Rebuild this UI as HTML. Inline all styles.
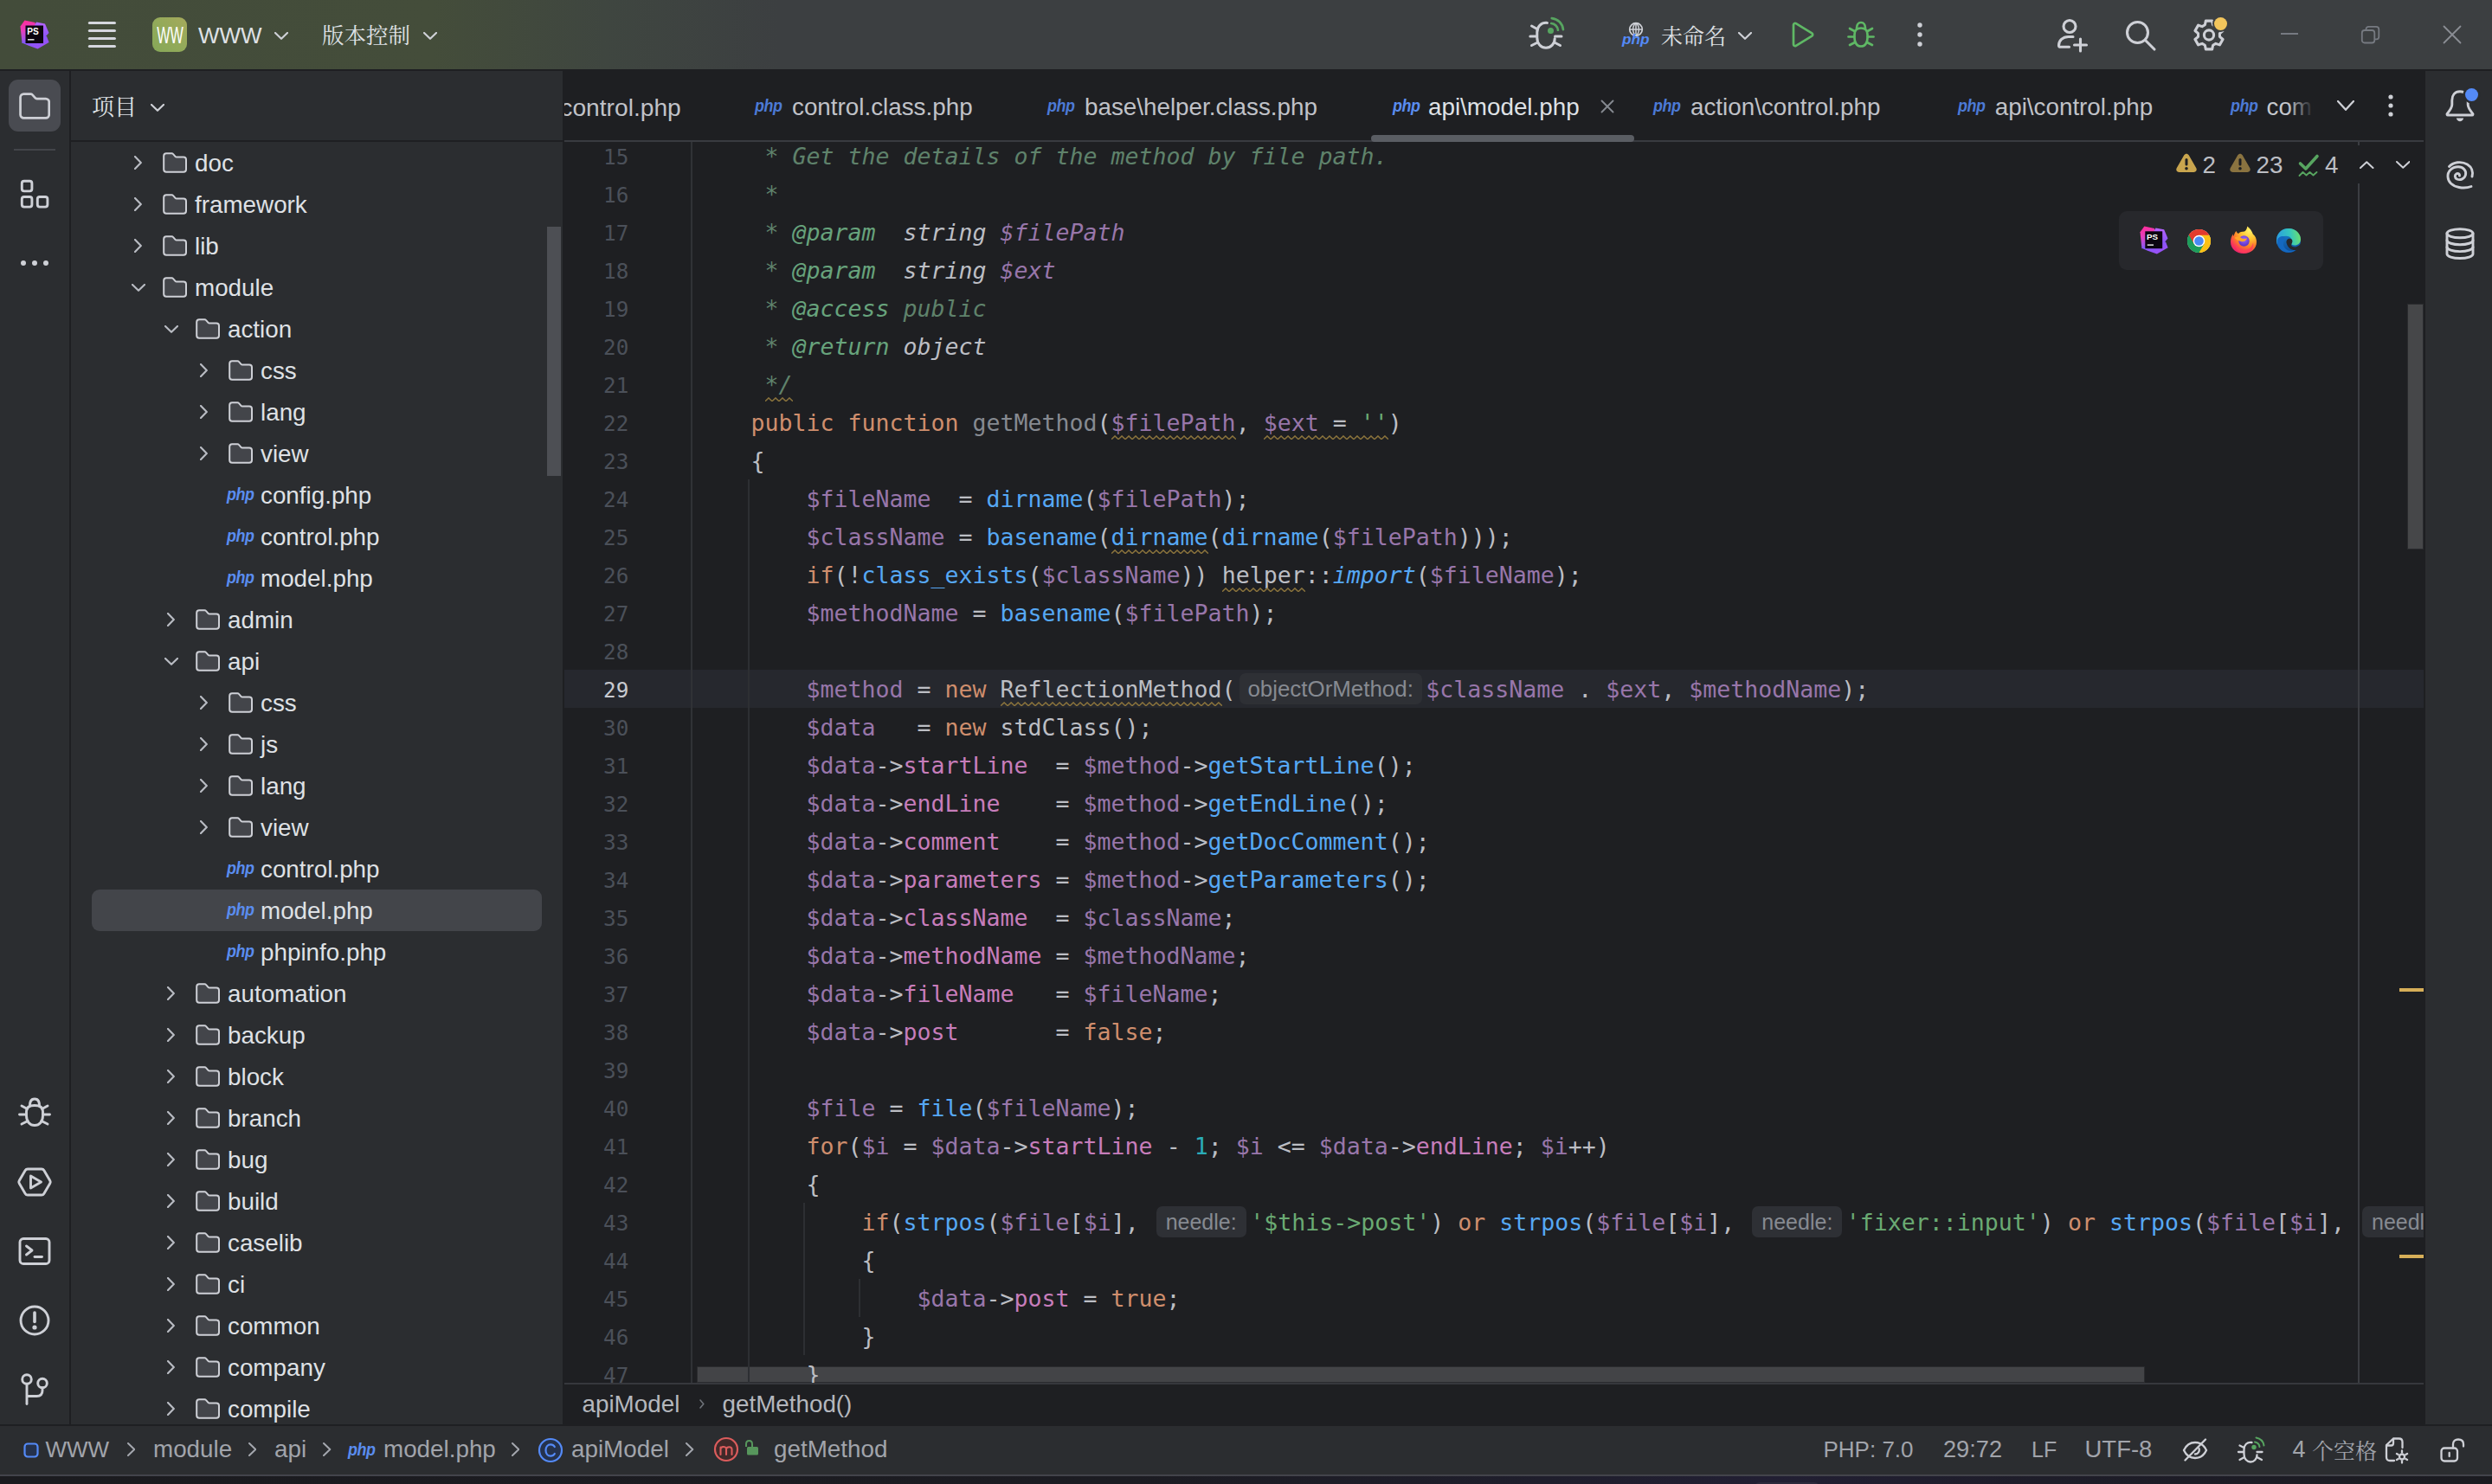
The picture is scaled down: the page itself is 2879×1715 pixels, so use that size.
<!DOCTYPE html><html lang="zh-CN"><head><meta charset="utf-8"><title>www – api\model.php</title><style>
*{box-sizing:border-box}
html,body{margin:0;padding:0}
body{width:2879px;height:1715px;overflow:hidden;background:#1e1f22;position:relative;font-family:'Liberation Sans','Noto Sans CJK SC',sans-serif;color:#dfe1e5;-webkit-font-smoothing:antialiased}
.abs{position:absolute}
.t{position:absolute;white-space:pre;font-size:27.8px;line-height:40px;height:40px;color:#dfe1e5}
.cjk{font-family:'Liberation Serif','Noto Serif CJK SC',serif;font-size:25.5px}
#title{left:0;top:0;width:2879px;height:80px;background:linear-gradient(90deg,#434c3a 0px,#444d3a 500px,#3f4640 700px,#3c3f41 900px)}
#lstrip{left:0;top:82px;width:80px;height:1565px;background:#2b2d30}
#proj{left:82px;top:82px;width:568px;height:1565px;background:#2b2d30;overflow:hidden}
#rstrip{left:2802px;top:82px;width:77px;height:1565px;background:#2b2d30}
#status{left:0;top:1648px;width:2879px;height:56px;background:#2b2d30}
#status .t{color:#a1a4ab}
#taskbar{left:0;top:1704px;width:2879px;height:11px;background:linear-gradient(90deg,#1b1b1f 0%,#1c1c22 45%,#1f1e2c 62%,#221f33 71%,#1e1d29 82%,#1b1b20 100%);border-top:2px solid #43444b}
#editor{left:652px;top:82px;width:2148px;height:1565px;background:#1e1f22;overflow:hidden}
.row{position:absolute;left:0;height:48px;width:568px}
.row .t{top:5.3px}
.ln{position:absolute;left:0;width:74.3px;text-align:right;font-family:'DejaVu Sans Mono','Liberation Mono',monospace;font-size:24.3px;line-height:44px;height:44px;color:#4b5059;margin-top:1.9px}
.cl{position:absolute;left:151.5px;margin-top:1.3px;white-space:pre;font-family:'DejaVu Sans Mono','Liberation Mono',monospace;font-size:26.58px;line-height:44px;height:44px;color:#bcbec4}
.k{color:#cf8e6d} .v{color:#9876aa} .p{color:#c77dbb} .f{color:#56a8f5} .s{color:#6aab73} .n{color:#2aacb8}
.d{color:#5f826b;font-style:italic} .dt{color:#67a37c;font-style:italic} .dw{color:#bcbec4;font-style:italic} .dv{color:#9876aa;font-style:italic}
.g{color:#868a91} .i{font-style:italic}
.w{}
.h{display:inline-block;vertical-align:top;height:36px;margin:2.7px 4.5px 0 4px;padding:0;text-align:center;border-radius:7px;background:#2e3035;color:#868a91;font-family:'Liberation Sans','Noto Sans CJK SC',sans-serif;font-size:25px;line-height:36px;font-style:normal;width:104px}
.h.o{width:211px;font-size:25.9px}
</style></head><body>
<div id="title" class="abs">
<svg style="position:absolute;left:23px;top:23px" width="34" height="34" viewBox="0 0 34 34" fill="none" >
<defs>
<linearGradient id="psa" x1="0.3" y1="0" x2="0.5" y2="1"><stop offset="0" stop-color="#ff2d9a"/><stop offset="0.45" stop-color="#e040c0"/><stop offset="1" stop-color="#7a5cff"/></linearGradient>
<linearGradient id="psb" x1="0" y1="0" x2="0" y2="1"><stop offset="0" stop-color="#b765ff"/><stop offset="1" stop-color="#7a4df5"/></linearGradient>
<linearGradient id="psc" x1="0" y1="0" x2="1" y2="1"><stop offset="0" stop-color="#7a5cff"/><stop offset="1" stop-color="#a24df2"/></linearGradient>
</defs>
<polygon points="5.5,0.5 17.5,3 20,14 9,26 2.500,27 0.5,7.500" fill="url(#psa)"/>
<polygon points="19,2.5 29,4.5 33.5,15 30,19 33.500,26 24,24 14,12" fill="url(#psb)"/>
<polygon points="2.500,26.500 12,20 31,19 33.5,26 20.5,33.5 9.5,29.5" fill="url(#psc)"/>
<rect x="6.5" y="6.5" width="20.5" height="20.5" fill="#0b0410"/>
<rect x="9" y="22" width="7.5" height="1.6" fill="#d8d8d8"/>
<text x="8.3" y="16.9" font-family="Liberation Sans,sans-serif" font-weight="bold" font-size="10.2" fill="#fff" textLength="13.5" lengthAdjust="spacingAndGlyphs">PS</text>
</svg>
<svg style="position:absolute;left:100px;top:23px" width="36" height="34" viewBox="0 0 36 34" fill="none" ><line x1="3.4" y1="3.5" x2="32.4" y2="3.5" stroke="#d5d7de" stroke-width="3.2" stroke-linecap="round"/><line x1="3.4" y1="12.5" x2="32.4" y2="12.5" stroke="#d5d7de" stroke-width="3.2" stroke-linecap="round"/><line x1="3.4" y1="21.5" x2="32.4" y2="21.5" stroke="#d5d7de" stroke-width="3.2" stroke-linecap="round"/><line x1="3.4" y1="30.5" x2="32.4" y2="30.5" stroke="#d5d7de" stroke-width="3.2" stroke-linecap="round"/></svg>
<div class="abs" style="left:176px;top:20px;width:40px;height:40px;border-radius:9px;background:linear-gradient(45deg,#86a858 0%,#93aa5a 50%,#a6a95c 100%)"></div>
<div class="abs" style="left:176px;top:20px;width:40px;height:40px;text-align:center;overflow:visible"><span style="display:inline-block;font:27px/40px 'Liberation Sans',sans-serif;color:#fff;transform:scaleX(0.6);transform-origin:50% 50%;margin-left:-10px;margin-right:-10px;position:relative;top:0.5px">WW</span></div>
<span class="t" style="left:229px;top:21px;font-size:26px">WWW</span>
<svg style="position:absolute;left:317px;top:36.5px" width="16" height="9" viewBox="0 0 16 9" fill="none" ><path d="M1 1 L8.0 7.8 L15 1" stroke="#ced0d6" stroke-width="2.2" stroke-linecap="round" stroke-linejoin="round"/></svg>
<span class="t cjk" style="left:372px;top:21.7px;letter-spacing:0px">版本控制</span>
<svg style="position:absolute;left:489px;top:36.5px" width="16" height="9" viewBox="0 0 16 9" fill="none" ><path d="M1 1 L8.0 7.8 L15 1" stroke="#ced0d6" stroke-width="2.2" stroke-linecap="round" stroke-linejoin="round"/></svg>
<svg style="position:absolute;left:1766px;top:19px" width="42" height="38" viewBox="0 0 42 38" fill="none" >
<g stroke="#ced0d6" stroke-width="3" stroke-linecap="round" fill="none">
<path d="M21.5 7.400 C14.5 6.800 9.800 11.500 9.800 18.500 V24.500 C9.800 31.500 14.200 36.200 20 36.200 C25.800 36.200 30.200 31.500 30.200 25.500"/>
<path d="M1.800 23 H9.500"/><path d="M30.500 23 H38"/>
<path d="M3.500 11 L9.800 14.500"/><path d="M3.500 33.500 L10.500 30"/><path d="M36.500 33.500 L29.800 30"/>
</g>
<circle cx="25.500" cy="16.500" r="3.500" fill="#57a560"/>
<path d="M26.240 8.030 A8.500 8.500 0 0 1 33.970 15.760" stroke="#57a560" stroke-width="2.700" stroke-linecap="round"/>
<path d="M26.760 2.060 A14.500 14.500 0 0 1 39.940 15.240" stroke="#57a560" stroke-width="2.700" stroke-linecap="round"/>
</svg>
<svg style="position:absolute;left:1881px;top:25px" width="18" height="18" viewBox="0 0 18 18" fill="none" ><circle cx="9" cy="9" r="7.3" stroke="#ced0d6" stroke-width="1.7"/><path d="M1.7 9 H16.3 M9 1.7 V16.3 M9 1.7 C4.5 5 4.5 13 9 16.3 M9 1.7 C13.5 5 13.5 13 9 16.3" stroke="#ced0d6" stroke-width="1.5"/></svg>
<span class="abs" style="left:1874px;top:34.3px;font:italic bold 16px/24px 'Liberation Sans',sans-serif;color:#548af7;transform:scaleX(1.08);transform-origin:0 50%;letter-spacing:0px">php</span>
<span class="t cjk" style="left:1919px;top:22.5px;font-size:25px">未命名</span>
<svg style="position:absolute;left:2008px;top:37px" width="16" height="9" viewBox="0 0 16 9" fill="none" ><path d="M1 1 L8.0 7.8 L15 1" stroke="#ced0d6" stroke-width="2.2" stroke-linecap="round" stroke-linejoin="round"/></svg>
<svg style="position:absolute;left:2068px;top:24px" width="30" height="32" viewBox="0 0 30 32" fill="none" ><path d="M4 4.8 C4 3.3 5.6 2.4 6.9 3.2 L25.3 14.3 C26.5 15.1 26.5 16.9 25.3 17.7 L6.9 28.8 C5.6 29.6 4 28.7 4 27.2 Z" stroke="#5fb865" stroke-width="2.7" stroke-linejoin="round"/></svg>
<svg style="position:absolute;left:2133px;top:23px" width="34" height="33" viewBox="0 0 34 33" fill="none" >
<g stroke="#5fb865" stroke-width="2.7" stroke-linecap="round" fill="none">
<path d="M9.5 17 C9.5 12 12.5 9.5 17 9.5 C21.5 9.5 24.5 12 24.5 17 V21 C24.5 26.5 21.5 30.5 17 30.5 C12.500 30.5 9.5 26.5 9.5 21 Z"/>
<path d="M12 9.5 C12 5.5 14 3 17 3 C20 3 22 5.5 22 9.5"/>
<path d="M2.5 19.5 H9"/><path d="M25 19.5 H31.500"/>
<path d="M4 10 L9.500 13"/><path d="M30 10 L24.500 13"/>
<path d="M4 29 L10 26"/><path d="M30 29 L24 26"/>
</g></svg>
<svg style="position:absolute;left:2212px;top:23px" width="12" height="34" viewBox="0 0 12 34" fill="none" ><circle cx="6" cy="6" r="2.7" fill="#ced0d6"/><circle cx="6" cy="17" r="2.7" fill="#ced0d6"/><circle cx="6" cy="28" r="2.7" fill="#ced0d6"/></svg>
<svg style="position:absolute;left:2375px;top:20px" width="40" height="42" viewBox="0 0 40 42" fill="none" >
<g stroke="#ced0d6" stroke-width="3.1" stroke-linecap="round" fill="none">
<circle cx="16" cy="10.5" r="7"/>
<path d="M20 22.500 H14.500 C8 22.500 3.500 27 3.500 32.500 C3.500 33.700 4.300 34.300 5.500 34.300 H15.500"/>
<path d="M28.500 25 V39"/><path d="M21.500 32 H35.500"/>
</g></svg>
<svg style="position:absolute;left:2454px;top:22px" width="38" height="38" viewBox="0 0 38 38" fill="none" ><circle cx="15.5" cy="15.5" r="12" stroke="#ced0d6" stroke-width="3.100"/><path d="M24.5 24.5 L35 35" stroke="#ced0d6" stroke-width="3.100" stroke-linecap="round"/></svg>
<svg style="position:absolute;left:2533px;top:20px" width="38" height="40" viewBox="0 0 38 40" fill="none" ><path d="M15.34 4.10 L22.66 4.10 L23.64 8.78 L26.83 10.63 L31.37 9.13 L35.03 15.48 L31.46 18.66 L31.46 22.34 L35.03 25.52 L31.37 31.87 L26.83 30.37 L23.64 32.22 L22.66 36.90 L15.34 36.90 L14.36 32.22 L11.17 30.37 L6.63 31.87 L2.97 25.52 L6.54 22.34 L6.54 18.66 L2.97 15.48 L6.63 9.13 L11.17 10.63 L14.36 8.78 Z" stroke="#ced0d6" stroke-width="3.100" stroke-linejoin="round"/><circle cx="19" cy="20.5" r="5.6" stroke="#ced0d6" stroke-width="3.100"/></svg>
<div class="abs" style="left:2557.500px;top:19.500px;width:15px;height:15px;border-radius:50%;background:#f2c55c;box-shadow:0 0 0 2px #3c3f41"></div>
<div class="abs" style="left:2635px;top:38px;width:20px;height:2px;background:#767a81"></div>
<svg style="position:absolute;left:2727px;top:29px" width="24" height="22" viewBox="0 0 24 22" fill="none" ><rect x="1.8" y="6" width="14.5" height="14.5" rx="3" stroke="#767a81" stroke-width="1.8"/><path d="M6.5 5.5 V4.8 C6.5 3 7.800 1.800 9.500 1.800 H18 C20 1.800 21.300 3 21.300 5 V13.500 C21.300 15.200 20.200 16.300 18.500 16.300 H17" stroke="#767a81" stroke-width="1.8"/></svg>
<svg style="position:absolute;left:2822px;top:29px" width="22" height="22" viewBox="0 0 22 22" fill="none" ><path d="M1.5 1.5 L20.5 20.5 M20.5 1.5 L1.5 20.5" stroke="#8a8d94" stroke-width="1.8" stroke-linecap="round"/></svg>
</div>
<div id="lstrip" class="abs">
<div class="abs" style="left:10px;top:10px;width:60px;height:60px;border-radius:11px;background:#494b51"></div>
<svg style="position:absolute;left:22px;top:25px" width="36" height="30.86" viewBox="0 0 28 24" fill="none" ><path d="M1.2 4.2 a3 3 0 0 1 3 -3 h6.2 a2 2 0 0 1 1.5 .7 l2.6 2.9 a2 2 0 0 0 1.5 .7 h8 a3 3 0 0 1 3 3 v11.3 a3 3 0 0 1 -3 3 h-19.8 a3 3 0 0 1 -3 -3 z" fill="none" stroke="#ced0d6" stroke-width="2.1" stroke-linejoin="round"/></svg>
<div class="abs" style="left:16px;top:90px;width:48px;height:2px;background:#43454a"></div>
<svg style="position:absolute;left:22px;top:124px" width="36" height="36" viewBox="0 0 36 36" fill="none" ><g stroke="#ced0d6" stroke-width="2.9"><rect x="3.3" y="3.3" width="11.6" height="11.6" rx="2.6"/><rect x="3.3" y="21.5" width="11.6" height="11.6" rx="2.6"/><rect x="21.300" y="21.5" width="11.6" height="11.6" rx="2.6"/></g></svg>
<svg style="position:absolute;left:22px;top:216px" width="36" height="12" viewBox="0 0 36 12" fill="none" ><circle cx="5" cy="6" r="3" fill="#ced0d6"/><circle cx="18" cy="6" r="3" fill="#ced0d6"/><circle cx="31" cy="6" r="3" fill="#ced0d6"/></svg>
<svg style="position:absolute;left:20px;top:1185px" width="40" height="36" viewBox="0 0 40 36" fill="none" >
<g stroke="#ced0d6" stroke-width="2.9" stroke-linecap="round" fill="none">
<path d="M10.5 17.500 C10.5 12.5 14.500 10.500 20 10.500 C25.500 10.500 29.5 12.5 29.5 17.500 V22.500 C29.5 29 25.500 33.5 20 33.5 C14.500 33.5 10.5 29 10.5 22.500 Z"/>
<path d="M14.5 10.500 C14.5 6 16.500 3 20 3 C23.500 3 25.5 6 25.5 10.500"/>
<path d="M2.500 21 H10"/><path d="M30 21 H37.500"/>
<path d="M5 11 L11.500 14.500"/><path d="M35 11 L28.500 14.500"/>
<path d="M5 32 L12 28.5"/><path d="M35 32 L28 28.5"/>
</g></svg>
<svg style="position:absolute;left:19px;top:1266px" width="42" height="36" viewBox="0 0 42 36" fill="none" >
<g stroke="#ced0d6" stroke-width="2.9" stroke-linejoin="round" fill="none">
<path d="M13 3 H29 C30.200 3 31.200 3.600 31.800 4.600 L38.800 16.500 C39.400 17.500 39.400 18.600 38.800 19.600 L31.800 31.400 C31.200 32.400 30.200 33 29 33 H13 C11.800 33 10.800 32.400 10.200 31.400 L3.200 19.600 C2.600 18.600 2.600 17.500 3.200 16.500 L10.200 4.600 C10.800 3.600 11.800 3 13 3 Z"/>
<path d="M16.500 11 L28.500 18 L16.500 25 Z"/>
</g></svg>
<svg style="position:absolute;left:20px;top:1347px" width="40" height="34" viewBox="0 0 40 34" fill="none" >
<g stroke="#ced0d6" stroke-width="2.9" stroke-linecap="round" stroke-linejoin="round" fill="none">
<rect x="3" y="2.500" width="34" height="29" rx="4"/>
<path d="M10.5 11 L17 16 L10.5 21"/><path d="M20 23.500 H28.500"/>
</g></svg>
<svg style="position:absolute;left:21px;top:1425px" width="38" height="38" viewBox="0 0 38 38" fill="none" ><circle cx="19" cy="19" r="16" stroke="#ced0d6" stroke-width="2.9"/><path d="M19 10 V20.500" stroke="#ced0d6" stroke-width="3.6" stroke-linecap="round"/><circle cx="19" cy="27" r="2.600" fill="#ced0d6"/></svg>
<svg style="position:absolute;left:22px;top:1504px" width="36" height="40" viewBox="0 0 36 40" fill="none" >
<g stroke="#ced0d6" stroke-width="2.9" stroke-linecap="round" fill="none">
<circle cx="9" cy="8" r="5.300"/><circle cx="27" cy="12.500" r="5.300"/>
<path d="M9 13.500 V36.500"/><path d="M27 18 V21 C27 25 25 27.500 20.500 27.500 H9.500"/>
</g></svg>
</div>
<div id="proj" class="abs">
<span class="t cjk" style="left:24px;top:22.5px;font-size:26px">项目</span>
<svg style="position:absolute;left:92px;top:38px" width="16" height="9" viewBox="0 0 16 9" fill="none" ><path d="M1 1 L8.0 7.8 L15 1" stroke="#ced0d6" stroke-width="2.2" stroke-linecap="round" stroke-linejoin="round"/></svg>
<div class="abs" style="left:0;top:80px;width:568px;height:2px;background:#1e1f22"></div>
<div class="row" style="top:82px">
<svg style="position:absolute;left:73px;top:16px" width="9" height="16" viewBox="0 0 9 16" fill="none" ><path d="M1 1 L7.8 8.0 L1 15" stroke="#b8bbc2" stroke-width="2.2" stroke-linecap="round" stroke-linejoin="round"/></svg>
<svg style="position:absolute;left:106px;top:12px" width="28" height="24" viewBox="0 0 28 24" fill="none" ><path d="M1.2 4.2 a3 3 0 0 1 3 -3 h6.2 a2 2 0 0 1 1.5 .7 l2.6 2.9 a2 2 0 0 0 1.5 .7 h8 a3 3 0 0 1 3 3 v11.3 a3 3 0 0 1 -3 3 h-19.8 a3 3 0 0 1 -3 -3 z" fill="#43454a" stroke="#ced0d6" stroke-width="2" stroke-linejoin="round"/></svg>
<span class="t" style="left:143px">doc</span>
</div>
<div class="row" style="top:130px">
<svg style="position:absolute;left:73px;top:16px" width="9" height="16" viewBox="0 0 9 16" fill="none" ><path d="M1 1 L7.8 8.0 L1 15" stroke="#b8bbc2" stroke-width="2.2" stroke-linecap="round" stroke-linejoin="round"/></svg>
<svg style="position:absolute;left:106px;top:12px" width="28" height="24" viewBox="0 0 28 24" fill="none" ><path d="M1.2 4.2 a3 3 0 0 1 3 -3 h6.2 a2 2 0 0 1 1.5 .7 l2.6 2.9 a2 2 0 0 0 1.5 .7 h8 a3 3 0 0 1 3 3 v11.3 a3 3 0 0 1 -3 3 h-19.8 a3 3 0 0 1 -3 -3 z" fill="#43454a" stroke="#ced0d6" stroke-width="2" stroke-linejoin="round"/></svg>
<span class="t" style="left:143px">framework</span>
</div>
<div class="row" style="top:178px">
<svg style="position:absolute;left:73px;top:16px" width="9" height="16" viewBox="0 0 9 16" fill="none" ><path d="M1 1 L7.8 8.0 L1 15" stroke="#b8bbc2" stroke-width="2.2" stroke-linecap="round" stroke-linejoin="round"/></svg>
<svg style="position:absolute;left:106px;top:12px" width="28" height="24" viewBox="0 0 28 24" fill="none" ><path d="M1.2 4.2 a3 3 0 0 1 3 -3 h6.2 a2 2 0 0 1 1.5 .7 l2.6 2.9 a2 2 0 0 0 1.5 .7 h8 a3 3 0 0 1 3 3 v11.3 a3 3 0 0 1 -3 3 h-19.8 a3 3 0 0 1 -3 -3 z" fill="#43454a" stroke="#ced0d6" stroke-width="2" stroke-linejoin="round"/></svg>
<span class="t" style="left:143px">lib</span>
</div>
<div class="row" style="top:226px">
<svg style="position:absolute;left:70px;top:20px" width="16" height="9" viewBox="0 0 16 9" fill="none" ><path d="M1 1 L8.0 7.8 L15 1" stroke="#b8bbc2" stroke-width="2.2" stroke-linecap="round" stroke-linejoin="round"/></svg>
<svg style="position:absolute;left:106px;top:12px" width="28" height="24" viewBox="0 0 28 24" fill="none" ><path d="M1.2 4.2 a3 3 0 0 1 3 -3 h6.2 a2 2 0 0 1 1.5 .7 l2.6 2.9 a2 2 0 0 0 1.5 .7 h8 a3 3 0 0 1 3 3 v11.3 a3 3 0 0 1 -3 3 h-19.8 a3 3 0 0 1 -3 -3 z" fill="#43454a" stroke="#ced0d6" stroke-width="2" stroke-linejoin="round"/></svg>
<span class="t" style="left:143px">module</span>
</div>
<div class="row" style="top:274px">
<svg style="position:absolute;left:108px;top:20px" width="16" height="9" viewBox="0 0 16 9" fill="none" ><path d="M1 1 L8.0 7.8 L15 1" stroke="#b8bbc2" stroke-width="2.2" stroke-linecap="round" stroke-linejoin="round"/></svg>
<svg style="position:absolute;left:144px;top:12px" width="28" height="24" viewBox="0 0 28 24" fill="none" ><path d="M1.2 4.2 a3 3 0 0 1 3 -3 h6.2 a2 2 0 0 1 1.5 .7 l2.6 2.9 a2 2 0 0 0 1.5 .7 h8 a3 3 0 0 1 3 3 v11.3 a3 3 0 0 1 -3 3 h-19.8 a3 3 0 0 1 -3 -3 z" fill="#43454a" stroke="#ced0d6" stroke-width="2" stroke-linejoin="round"/></svg>
<span class="t" style="left:181px">action</span>
</div>
<div class="row" style="top:322px">
<svg style="position:absolute;left:149px;top:16px" width="9" height="16" viewBox="0 0 9 16" fill="none" ><path d="M1 1 L7.8 8.0 L1 15" stroke="#b8bbc2" stroke-width="2.2" stroke-linecap="round" stroke-linejoin="round"/></svg>
<svg style="position:absolute;left:182px;top:12px" width="28" height="24" viewBox="0 0 28 24" fill="none" ><path d="M1.2 4.2 a3 3 0 0 1 3 -3 h6.2 a2 2 0 0 1 1.5 .7 l2.6 2.9 a2 2 0 0 0 1.5 .7 h8 a3 3 0 0 1 3 3 v11.3 a3 3 0 0 1 -3 3 h-19.8 a3 3 0 0 1 -3 -3 z" fill="#43454a" stroke="#ced0d6" stroke-width="2" stroke-linejoin="round"/></svg>
<span class="t" style="left:219px">css</span>
</div>
<div class="row" style="top:370px">
<svg style="position:absolute;left:149px;top:16px" width="9" height="16" viewBox="0 0 9 16" fill="none" ><path d="M1 1 L7.8 8.0 L1 15" stroke="#b8bbc2" stroke-width="2.2" stroke-linecap="round" stroke-linejoin="round"/></svg>
<svg style="position:absolute;left:182px;top:12px" width="28" height="24" viewBox="0 0 28 24" fill="none" ><path d="M1.2 4.2 a3 3 0 0 1 3 -3 h6.2 a2 2 0 0 1 1.5 .7 l2.6 2.9 a2 2 0 0 0 1.5 .7 h8 a3 3 0 0 1 3 3 v11.3 a3 3 0 0 1 -3 3 h-19.8 a3 3 0 0 1 -3 -3 z" fill="#43454a" stroke="#ced0d6" stroke-width="2" stroke-linejoin="round"/></svg>
<span class="t" style="left:219px">lang</span>
</div>
<div class="row" style="top:418px">
<svg style="position:absolute;left:149px;top:16px" width="9" height="16" viewBox="0 0 9 16" fill="none" ><path d="M1 1 L7.8 8.0 L1 15" stroke="#b8bbc2" stroke-width="2.2" stroke-linecap="round" stroke-linejoin="round"/></svg>
<svg style="position:absolute;left:182px;top:12px" width="28" height="24" viewBox="0 0 28 24" fill="none" ><path d="M1.2 4.2 a3 3 0 0 1 3 -3 h6.2 a2 2 0 0 1 1.5 .7 l2.6 2.9 a2 2 0 0 0 1.5 .7 h8 a3 3 0 0 1 3 3 v11.3 a3 3 0 0 1 -3 3 h-19.8 a3 3 0 0 1 -3 -3 z" fill="#43454a" stroke="#ced0d6" stroke-width="2" stroke-linejoin="round"/></svg>
<span class="t" style="left:219px">view</span>
</div>
<div class="row" style="top:466px">
<span style="position:absolute;left:180px;top:11px;width:34px;height:24px;overflow:visible;font:italic bold 19.5px/24px 'Liberation Sans',sans-serif;color:#5a8df0;display:inline-block;transform-origin:0 50%;transform:scaleX(0.92);letter-spacing:-0.5px;white-space:nowrap">php</span>
<span class="t" style="left:219px">config.php</span>
</div>
<div class="row" style="top:514px">
<span style="position:absolute;left:180px;top:11px;width:34px;height:24px;overflow:visible;font:italic bold 19.5px/24px 'Liberation Sans',sans-serif;color:#5a8df0;display:inline-block;transform-origin:0 50%;transform:scaleX(0.92);letter-spacing:-0.5px;white-space:nowrap">php</span>
<span class="t" style="left:219px">control.php</span>
</div>
<div class="row" style="top:562px">
<span style="position:absolute;left:180px;top:11px;width:34px;height:24px;overflow:visible;font:italic bold 19.5px/24px 'Liberation Sans',sans-serif;color:#5a8df0;display:inline-block;transform-origin:0 50%;transform:scaleX(0.92);letter-spacing:-0.5px;white-space:nowrap">php</span>
<span class="t" style="left:219px">model.php</span>
</div>
<div class="row" style="top:610px">
<svg style="position:absolute;left:111px;top:16px" width="9" height="16" viewBox="0 0 9 16" fill="none" ><path d="M1 1 L7.8 8.0 L1 15" stroke="#b8bbc2" stroke-width="2.2" stroke-linecap="round" stroke-linejoin="round"/></svg>
<svg style="position:absolute;left:144px;top:12px" width="28" height="24" viewBox="0 0 28 24" fill="none" ><path d="M1.2 4.2 a3 3 0 0 1 3 -3 h6.2 a2 2 0 0 1 1.5 .7 l2.6 2.9 a2 2 0 0 0 1.5 .7 h8 a3 3 0 0 1 3 3 v11.3 a3 3 0 0 1 -3 3 h-19.8 a3 3 0 0 1 -3 -3 z" fill="#43454a" stroke="#ced0d6" stroke-width="2" stroke-linejoin="round"/></svg>
<span class="t" style="left:181px">admin</span>
</div>
<div class="row" style="top:658px">
<svg style="position:absolute;left:108px;top:20px" width="16" height="9" viewBox="0 0 16 9" fill="none" ><path d="M1 1 L8.0 7.8 L15 1" stroke="#b8bbc2" stroke-width="2.2" stroke-linecap="round" stroke-linejoin="round"/></svg>
<svg style="position:absolute;left:144px;top:12px" width="28" height="24" viewBox="0 0 28 24" fill="none" ><path d="M1.2 4.2 a3 3 0 0 1 3 -3 h6.2 a2 2 0 0 1 1.5 .7 l2.6 2.9 a2 2 0 0 0 1.5 .7 h8 a3 3 0 0 1 3 3 v11.3 a3 3 0 0 1 -3 3 h-19.8 a3 3 0 0 1 -3 -3 z" fill="#43454a" stroke="#ced0d6" stroke-width="2" stroke-linejoin="round"/></svg>
<span class="t" style="left:181px">api</span>
</div>
<div class="row" style="top:706px">
<svg style="position:absolute;left:149px;top:16px" width="9" height="16" viewBox="0 0 9 16" fill="none" ><path d="M1 1 L7.8 8.0 L1 15" stroke="#b8bbc2" stroke-width="2.2" stroke-linecap="round" stroke-linejoin="round"/></svg>
<svg style="position:absolute;left:182px;top:12px" width="28" height="24" viewBox="0 0 28 24" fill="none" ><path d="M1.2 4.2 a3 3 0 0 1 3 -3 h6.2 a2 2 0 0 1 1.5 .7 l2.6 2.9 a2 2 0 0 0 1.5 .7 h8 a3 3 0 0 1 3 3 v11.3 a3 3 0 0 1 -3 3 h-19.8 a3 3 0 0 1 -3 -3 z" fill="#43454a" stroke="#ced0d6" stroke-width="2" stroke-linejoin="round"/></svg>
<span class="t" style="left:219px">css</span>
</div>
<div class="row" style="top:754px">
<svg style="position:absolute;left:149px;top:16px" width="9" height="16" viewBox="0 0 9 16" fill="none" ><path d="M1 1 L7.8 8.0 L1 15" stroke="#b8bbc2" stroke-width="2.2" stroke-linecap="round" stroke-linejoin="round"/></svg>
<svg style="position:absolute;left:182px;top:12px" width="28" height="24" viewBox="0 0 28 24" fill="none" ><path d="M1.2 4.2 a3 3 0 0 1 3 -3 h6.2 a2 2 0 0 1 1.5 .7 l2.6 2.9 a2 2 0 0 0 1.5 .7 h8 a3 3 0 0 1 3 3 v11.3 a3 3 0 0 1 -3 3 h-19.8 a3 3 0 0 1 -3 -3 z" fill="#43454a" stroke="#ced0d6" stroke-width="2" stroke-linejoin="round"/></svg>
<span class="t" style="left:219px">js</span>
</div>
<div class="row" style="top:802px">
<svg style="position:absolute;left:149px;top:16px" width="9" height="16" viewBox="0 0 9 16" fill="none" ><path d="M1 1 L7.8 8.0 L1 15" stroke="#b8bbc2" stroke-width="2.2" stroke-linecap="round" stroke-linejoin="round"/></svg>
<svg style="position:absolute;left:182px;top:12px" width="28" height="24" viewBox="0 0 28 24" fill="none" ><path d="M1.2 4.2 a3 3 0 0 1 3 -3 h6.2 a2 2 0 0 1 1.5 .7 l2.6 2.9 a2 2 0 0 0 1.5 .7 h8 a3 3 0 0 1 3 3 v11.3 a3 3 0 0 1 -3 3 h-19.8 a3 3 0 0 1 -3 -3 z" fill="#43454a" stroke="#ced0d6" stroke-width="2" stroke-linejoin="round"/></svg>
<span class="t" style="left:219px">lang</span>
</div>
<div class="row" style="top:850px">
<svg style="position:absolute;left:149px;top:16px" width="9" height="16" viewBox="0 0 9 16" fill="none" ><path d="M1 1 L7.8 8.0 L1 15" stroke="#b8bbc2" stroke-width="2.2" stroke-linecap="round" stroke-linejoin="round"/></svg>
<svg style="position:absolute;left:182px;top:12px" width="28" height="24" viewBox="0 0 28 24" fill="none" ><path d="M1.2 4.2 a3 3 0 0 1 3 -3 h6.2 a2 2 0 0 1 1.5 .7 l2.6 2.9 a2 2 0 0 0 1.5 .7 h8 a3 3 0 0 1 3 3 v11.3 a3 3 0 0 1 -3 3 h-19.8 a3 3 0 0 1 -3 -3 z" fill="#43454a" stroke="#ced0d6" stroke-width="2" stroke-linejoin="round"/></svg>
<span class="t" style="left:219px">view</span>
</div>
<div class="row" style="top:898px">
<span style="position:absolute;left:180px;top:11px;width:34px;height:24px;overflow:visible;font:italic bold 19.5px/24px 'Liberation Sans',sans-serif;color:#5a8df0;display:inline-block;transform-origin:0 50%;transform:scaleX(0.92);letter-spacing:-0.5px;white-space:nowrap">php</span>
<span class="t" style="left:219px">control.php</span>
</div>
<div class="row" style="top:946px">
<div class="abs" style="left:24px;top:0;width:520px;height:48px;border-radius:9px;background:#43454a"></div>
<span style="position:absolute;left:180px;top:11px;width:34px;height:24px;overflow:visible;font:italic bold 19.5px/24px 'Liberation Sans',sans-serif;color:#5a8df0;display:inline-block;transform-origin:0 50%;transform:scaleX(0.92);letter-spacing:-0.5px;white-space:nowrap">php</span>
<span class="t" style="left:219px">model.php</span>
</div>
<div class="row" style="top:994px">
<span style="position:absolute;left:180px;top:11px;width:34px;height:24px;overflow:visible;font:italic bold 19.5px/24px 'Liberation Sans',sans-serif;color:#5a8df0;display:inline-block;transform-origin:0 50%;transform:scaleX(0.92);letter-spacing:-0.5px;white-space:nowrap">php</span>
<span class="t" style="left:219px">phpinfo.php</span>
</div>
<div class="row" style="top:1042px">
<svg style="position:absolute;left:111px;top:16px" width="9" height="16" viewBox="0 0 9 16" fill="none" ><path d="M1 1 L7.8 8.0 L1 15" stroke="#b8bbc2" stroke-width="2.2" stroke-linecap="round" stroke-linejoin="round"/></svg>
<svg style="position:absolute;left:144px;top:12px" width="28" height="24" viewBox="0 0 28 24" fill="none" ><path d="M1.2 4.2 a3 3 0 0 1 3 -3 h6.2 a2 2 0 0 1 1.5 .7 l2.6 2.9 a2 2 0 0 0 1.5 .7 h8 a3 3 0 0 1 3 3 v11.3 a3 3 0 0 1 -3 3 h-19.8 a3 3 0 0 1 -3 -3 z" fill="#43454a" stroke="#ced0d6" stroke-width="2" stroke-linejoin="round"/></svg>
<span class="t" style="left:181px">automation</span>
</div>
<div class="row" style="top:1090px">
<svg style="position:absolute;left:111px;top:16px" width="9" height="16" viewBox="0 0 9 16" fill="none" ><path d="M1 1 L7.8 8.0 L1 15" stroke="#b8bbc2" stroke-width="2.2" stroke-linecap="round" stroke-linejoin="round"/></svg>
<svg style="position:absolute;left:144px;top:12px" width="28" height="24" viewBox="0 0 28 24" fill="none" ><path d="M1.2 4.2 a3 3 0 0 1 3 -3 h6.2 a2 2 0 0 1 1.5 .7 l2.6 2.9 a2 2 0 0 0 1.5 .7 h8 a3 3 0 0 1 3 3 v11.3 a3 3 0 0 1 -3 3 h-19.8 a3 3 0 0 1 -3 -3 z" fill="#43454a" stroke="#ced0d6" stroke-width="2" stroke-linejoin="round"/></svg>
<span class="t" style="left:181px">backup</span>
</div>
<div class="row" style="top:1138px">
<svg style="position:absolute;left:111px;top:16px" width="9" height="16" viewBox="0 0 9 16" fill="none" ><path d="M1 1 L7.8 8.0 L1 15" stroke="#b8bbc2" stroke-width="2.2" stroke-linecap="round" stroke-linejoin="round"/></svg>
<svg style="position:absolute;left:144px;top:12px" width="28" height="24" viewBox="0 0 28 24" fill="none" ><path d="M1.2 4.2 a3 3 0 0 1 3 -3 h6.2 a2 2 0 0 1 1.5 .7 l2.6 2.9 a2 2 0 0 0 1.5 .7 h8 a3 3 0 0 1 3 3 v11.3 a3 3 0 0 1 -3 3 h-19.8 a3 3 0 0 1 -3 -3 z" fill="#43454a" stroke="#ced0d6" stroke-width="2" stroke-linejoin="round"/></svg>
<span class="t" style="left:181px">block</span>
</div>
<div class="row" style="top:1186px">
<svg style="position:absolute;left:111px;top:16px" width="9" height="16" viewBox="0 0 9 16" fill="none" ><path d="M1 1 L7.8 8.0 L1 15" stroke="#b8bbc2" stroke-width="2.2" stroke-linecap="round" stroke-linejoin="round"/></svg>
<svg style="position:absolute;left:144px;top:12px" width="28" height="24" viewBox="0 0 28 24" fill="none" ><path d="M1.2 4.2 a3 3 0 0 1 3 -3 h6.2 a2 2 0 0 1 1.5 .7 l2.6 2.9 a2 2 0 0 0 1.5 .7 h8 a3 3 0 0 1 3 3 v11.3 a3 3 0 0 1 -3 3 h-19.8 a3 3 0 0 1 -3 -3 z" fill="#43454a" stroke="#ced0d6" stroke-width="2" stroke-linejoin="round"/></svg>
<span class="t" style="left:181px">branch</span>
</div>
<div class="row" style="top:1234px">
<svg style="position:absolute;left:111px;top:16px" width="9" height="16" viewBox="0 0 9 16" fill="none" ><path d="M1 1 L7.8 8.0 L1 15" stroke="#b8bbc2" stroke-width="2.2" stroke-linecap="round" stroke-linejoin="round"/></svg>
<svg style="position:absolute;left:144px;top:12px" width="28" height="24" viewBox="0 0 28 24" fill="none" ><path d="M1.2 4.2 a3 3 0 0 1 3 -3 h6.2 a2 2 0 0 1 1.5 .7 l2.6 2.9 a2 2 0 0 0 1.5 .7 h8 a3 3 0 0 1 3 3 v11.3 a3 3 0 0 1 -3 3 h-19.8 a3 3 0 0 1 -3 -3 z" fill="#43454a" stroke="#ced0d6" stroke-width="2" stroke-linejoin="round"/></svg>
<span class="t" style="left:181px">bug</span>
</div>
<div class="row" style="top:1282px">
<svg style="position:absolute;left:111px;top:16px" width="9" height="16" viewBox="0 0 9 16" fill="none" ><path d="M1 1 L7.8 8.0 L1 15" stroke="#b8bbc2" stroke-width="2.2" stroke-linecap="round" stroke-linejoin="round"/></svg>
<svg style="position:absolute;left:144px;top:12px" width="28" height="24" viewBox="0 0 28 24" fill="none" ><path d="M1.2 4.2 a3 3 0 0 1 3 -3 h6.2 a2 2 0 0 1 1.5 .7 l2.6 2.9 a2 2 0 0 0 1.5 .7 h8 a3 3 0 0 1 3 3 v11.3 a3 3 0 0 1 -3 3 h-19.8 a3 3 0 0 1 -3 -3 z" fill="#43454a" stroke="#ced0d6" stroke-width="2" stroke-linejoin="round"/></svg>
<span class="t" style="left:181px">build</span>
</div>
<div class="row" style="top:1330px">
<svg style="position:absolute;left:111px;top:16px" width="9" height="16" viewBox="0 0 9 16" fill="none" ><path d="M1 1 L7.8 8.0 L1 15" stroke="#b8bbc2" stroke-width="2.2" stroke-linecap="round" stroke-linejoin="round"/></svg>
<svg style="position:absolute;left:144px;top:12px" width="28" height="24" viewBox="0 0 28 24" fill="none" ><path d="M1.2 4.2 a3 3 0 0 1 3 -3 h6.2 a2 2 0 0 1 1.5 .7 l2.6 2.9 a2 2 0 0 0 1.5 .7 h8 a3 3 0 0 1 3 3 v11.3 a3 3 0 0 1 -3 3 h-19.8 a3 3 0 0 1 -3 -3 z" fill="#43454a" stroke="#ced0d6" stroke-width="2" stroke-linejoin="round"/></svg>
<span class="t" style="left:181px">caselib</span>
</div>
<div class="row" style="top:1378px">
<svg style="position:absolute;left:111px;top:16px" width="9" height="16" viewBox="0 0 9 16" fill="none" ><path d="M1 1 L7.8 8.0 L1 15" stroke="#b8bbc2" stroke-width="2.2" stroke-linecap="round" stroke-linejoin="round"/></svg>
<svg style="position:absolute;left:144px;top:12px" width="28" height="24" viewBox="0 0 28 24" fill="none" ><path d="M1.2 4.2 a3 3 0 0 1 3 -3 h6.2 a2 2 0 0 1 1.5 .7 l2.6 2.9 a2 2 0 0 0 1.5 .7 h8 a3 3 0 0 1 3 3 v11.3 a3 3 0 0 1 -3 3 h-19.8 a3 3 0 0 1 -3 -3 z" fill="#43454a" stroke="#ced0d6" stroke-width="2" stroke-linejoin="round"/></svg>
<span class="t" style="left:181px">ci</span>
</div>
<div class="row" style="top:1426px">
<svg style="position:absolute;left:111px;top:16px" width="9" height="16" viewBox="0 0 9 16" fill="none" ><path d="M1 1 L7.8 8.0 L1 15" stroke="#b8bbc2" stroke-width="2.2" stroke-linecap="round" stroke-linejoin="round"/></svg>
<svg style="position:absolute;left:144px;top:12px" width="28" height="24" viewBox="0 0 28 24" fill="none" ><path d="M1.2 4.2 a3 3 0 0 1 3 -3 h6.2 a2 2 0 0 1 1.5 .7 l2.6 2.9 a2 2 0 0 0 1.5 .7 h8 a3 3 0 0 1 3 3 v11.3 a3 3 0 0 1 -3 3 h-19.8 a3 3 0 0 1 -3 -3 z" fill="#43454a" stroke="#ced0d6" stroke-width="2" stroke-linejoin="round"/></svg>
<span class="t" style="left:181px">common</span>
</div>
<div class="row" style="top:1474px">
<svg style="position:absolute;left:111px;top:16px" width="9" height="16" viewBox="0 0 9 16" fill="none" ><path d="M1 1 L7.8 8.0 L1 15" stroke="#b8bbc2" stroke-width="2.2" stroke-linecap="round" stroke-linejoin="round"/></svg>
<svg style="position:absolute;left:144px;top:12px" width="28" height="24" viewBox="0 0 28 24" fill="none" ><path d="M1.2 4.2 a3 3 0 0 1 3 -3 h6.2 a2 2 0 0 1 1.5 .7 l2.6 2.9 a2 2 0 0 0 1.5 .7 h8 a3 3 0 0 1 3 3 v11.3 a3 3 0 0 1 -3 3 h-19.8 a3 3 0 0 1 -3 -3 z" fill="#43454a" stroke="#ced0d6" stroke-width="2" stroke-linejoin="round"/></svg>
<span class="t" style="left:181px">company</span>
</div>
<div class="row" style="top:1522px">
<svg style="position:absolute;left:111px;top:16px" width="9" height="16" viewBox="0 0 9 16" fill="none" ><path d="M1 1 L7.8 8.0 L1 15" stroke="#b8bbc2" stroke-width="2.2" stroke-linecap="round" stroke-linejoin="round"/></svg>
<svg style="position:absolute;left:144px;top:12px" width="28" height="24" viewBox="0 0 28 24" fill="none" ><path d="M1.2 4.2 a3 3 0 0 1 3 -3 h6.2 a2 2 0 0 1 1.5 .7 l2.6 2.9 a2 2 0 0 0 1.5 .7 h8 a3 3 0 0 1 3 3 v11.3 a3 3 0 0 1 -3 3 h-19.8 a3 3 0 0 1 -3 -3 z" fill="#43454a" stroke="#ced0d6" stroke-width="2" stroke-linejoin="round"/></svg>
<span class="t" style="left:181px">compile</span>
</div>
<div class="abs" style="left:550px;top:180px;width:16px;height:288px;background:#4d4f54"></div>
</div>
<div id="editor" class="abs">
<span class="t" style="left:-4.7000000000000455px;top:21.5px;color:#c0c2c8;font-size:28.2px">control.php</span>
<span style="position:absolute;left:220px;top:28px;width:34px;height:24px;overflow:visible;font:italic bold 19.5px/24px 'Liberation Sans',sans-serif;color:#4c7ad6;display:inline-block;transform-origin:0 50%;transform:scaleX(0.92);letter-spacing:-0.5px;white-space:nowrap">php</span>
<span class="t" style="left:263px;top:21.5px;color:#c0c2c8">control.class.php</span>
<span style="position:absolute;left:558px;top:28px;width:34px;height:24px;overflow:visible;font:italic bold 19.5px/24px 'Liberation Sans',sans-serif;color:#4c7ad6;display:inline-block;transform-origin:0 50%;transform:scaleX(0.92);letter-spacing:-0.5px;white-space:nowrap">php</span>
<span class="t" style="left:601px;top:21.5px;color:#c0c2c8">base\helper.class.php</span>
<span style="position:absolute;left:956.5px;top:28px;width:34px;height:24px;overflow:visible;font:italic bold 19.5px/24px 'Liberation Sans',sans-serif;color:#5a8df0;display:inline-block;transform-origin:0 50%;transform:scaleX(0.92);letter-spacing:-0.5px;white-space:nowrap">php</span>
<span class="t" style="left:998px;top:21.5px;color:#dfe1e5">api\model.php</span>
<span style="position:absolute;left:1258px;top:28px;width:34px;height:24px;overflow:visible;font:italic bold 19.5px/24px 'Liberation Sans',sans-serif;color:#4c7ad6;display:inline-block;transform-origin:0 50%;transform:scaleX(0.92);letter-spacing:-0.5px;white-space:nowrap">php</span>
<span class="t" style="left:1301px;top:21.5px;color:#c0c2c8">action\control.php</span>
<span style="position:absolute;left:1610px;top:28px;width:34px;height:24px;overflow:visible;font:italic bold 19.5px/24px 'Liberation Sans',sans-serif;color:#4c7ad6;display:inline-block;transform-origin:0 50%;transform:scaleX(0.92);letter-spacing:-0.5px;white-space:nowrap">php</span>
<span class="t" style="left:1652.75px;top:21.5px;color:#c0c2c8">api\control.php</span>
<span style="position:absolute;left:1924.5px;top:28px;width:34px;height:24px;overflow:visible;font:italic bold 19.5px/24px 'Liberation Sans',sans-serif;color:#4c7ad6;display:inline-block;transform-origin:0 50%;transform:scaleX(0.92);letter-spacing:-0.5px;white-space:nowrap">php</span>
<div class="abs" style="left:1966.5px;top:21.5px;width:54px;height:40px;overflow:hidden"><span class="t" style="left:0;top:0;color:#c5c7cd">common\control.php</span><div class="abs" style="left:24px;top:0;width:30px;height:40px;background:linear-gradient(90deg,rgba(30,31,34,0),#1e1f22)"></div></div>
<svg style="position:absolute;left:1196.5px;top:32.5px" width="16" height="16" viewBox="0 0 16 16" fill="none" ><path d="M1.5 1.5 L14.5 14.5 M14.5 1.5 L1.5 14.5" stroke="#868a91" stroke-width="1.9" stroke-linecap="round"/></svg>
<svg style="position:absolute;left:2048px;top:34px" width="20" height="12" viewBox="0 0 20 12" fill="none" ><path d="M1 1 L10.0 10.8 L19 1" stroke="#ced0d6" stroke-width="2.3" stroke-linecap="round" stroke-linejoin="round"/></svg>
<svg style="position:absolute;left:2104px;top:24px" width="12" height="32" viewBox="0 0 12 32" fill="none" ><circle cx="6" cy="6" r="2.6" fill="#ced0d6"/><circle cx="6" cy="16" r="2.6" fill="#ced0d6"/><circle cx="6" cy="26" r="2.6" fill="#ced0d6"/></svg>
<div class="abs" style="left:0;top:80.19999999999999px;width:2148px;height:2px;background:#393b40"></div>
<div class="abs" style="left:932px;top:74px;width:304px;height:8px;border-radius:4px;background:#5a5d63"></div>
<div class="abs" style="left:0;top:82px;width:2148px;height:1435px;overflow:hidden">
<div class="abs" style="left:0;top:610px;width:2148px;height:44px;background:#26282e"></div>
<div class="abs" style="left:152.5px;top:1414.5px;width:1673.0px;height:19px;background:#434447;border:1.5px solid #2a2b2e"></div>
<div class="abs" style="left:2128.5px;top:186.5px;width:19px;height:284.5px;background:#464749;border:1.5px solid #2a2b2e"></div>
<div class="abs" style="left:146.39999999999998px;top:0;width:2px;height:1436px;background:#303236"></div>
<div class="abs" style="left:2072px;top:0;width:2px;height:1436px;background:#3b3d42"></div>
<div class="abs" style="left:212.29999999999995px;top:390px;width:2px;height:1056px;background:#2d2f33"></div>
<div class="abs" style="left:276.20000000000005px;top:1226px;width:2px;height:176px;background:#2d2f33"></div>
<div class="abs" style="left:340px;top:1314px;width:2px;height:44px;background:#2d2f33"></div>
<div class="ln" style="top:-6px">15</div>
<div class="cl" style="top:-6px"><span class="d">     * Get the details of the method by file path.</span></div>
<div class="ln" style="top:38px">16</div>
<div class="cl" style="top:38px"><span class="d">     *</span></div>
<div class="ln" style="top:82px">17</div>
<div class="cl" style="top:82px"><span class="d">     * </span><span class="dt">@param</span><span class="dw">  string </span><span class="dv">$filePath</span></div>
<div class="ln" style="top:126px">18</div>
<div class="cl" style="top:126px"><span class="d">     * </span><span class="dt">@param</span><span class="dw">  string </span><span class="dv">$ext</span></div>
<div class="ln" style="top:170px">19</div>
<div class="cl" style="top:170px"><span class="d">     * </span><span class="dt">@access</span><span class="d"> public</span></div>
<div class="ln" style="top:214px">20</div>
<div class="cl" style="top:214px"><span class="d">     * </span><span class="dt">@return</span><span class="dw"> object</span></div>
<div class="ln" style="top:258px">21</div>
<div class="cl" style="top:258px"><span class="d">     </span><span class="d w">*/</span></div>
<div class="ln" style="top:302px">22</div>
<div class="cl" style="top:302px">    <span class="k">public</span> <span class="k">function</span> <span class="g">getMethod</span>(<span class="v w">$filePath</span>, <span class="w"><span class="v">$ext</span> = <span class="s">''</span></span>)</div>
<div class="ln" style="top:346px">23</div>
<div class="cl" style="top:346px">    {</div>
<div class="ln" style="top:390px">24</div>
<div class="cl" style="top:390px">        <span class="v">$fileName</span>  = <span class="f">dirname</span>(<span class="v">$filePath</span>);</div>
<div class="ln" style="top:434px">25</div>
<div class="cl" style="top:434px">        <span class="v">$className</span> = <span class="f">basename</span>(<span class="f w">dirname</span>(<span class="f">dirname</span>(<span class="v">$filePath</span>)));</div>
<div class="ln" style="top:478px">26</div>
<div class="cl" style="top:478px">        <span class="k">if</span>(!<span class="f">class_exists</span>(<span class="v">$className</span>)) <span class="w">helper</span>::<span class="f i">import</span>(<span class="v">$fileName</span>);</div>
<div class="ln" style="top:522px">27</div>
<div class="cl" style="top:522px">        <span class="v">$methodName</span> = <span class="f">basename</span>(<span class="v">$filePath</span>);</div>
<div class="ln" style="top:566px">28</div>
<div class="cl" style="top:566px"></div>
<div class="ln" style="top:610px;color:#c8cad0">29</div>
<div class="cl" style="top:610px">        <span class="v">$method</span> = <span class="k">new</span> <span class="w">ReflectionMethod</span>(<span class="h o">objectOrMethod:</span><span class="v">$className</span> . <span class="v">$ext</span>, <span class="v">$methodName</span>);</div>
<div class="ln" style="top:654px">30</div>
<div class="cl" style="top:654px">        <span class="v">$data</span>   = <span class="k">new</span> stdClass();</div>
<div class="ln" style="top:698px">31</div>
<div class="cl" style="top:698px">        <span class="v">$data</span>-><span class="p">startLine</span>  = <span class="v">$method</span>-><span class="f">getStartLine</span>();</div>
<div class="ln" style="top:742px">32</div>
<div class="cl" style="top:742px">        <span class="v">$data</span>-><span class="p">endLine</span>    = <span class="v">$method</span>-><span class="f">getEndLine</span>();</div>
<div class="ln" style="top:786px">33</div>
<div class="cl" style="top:786px">        <span class="v">$data</span>-><span class="p">comment</span>    = <span class="v">$method</span>-><span class="f">getDocComment</span>();</div>
<div class="ln" style="top:830px">34</div>
<div class="cl" style="top:830px">        <span class="v">$data</span>-><span class="p">parameters</span> = <span class="v">$method</span>-><span class="f">getParameters</span>();</div>
<div class="ln" style="top:874px">35</div>
<div class="cl" style="top:874px">        <span class="v">$data</span>-><span class="p">className</span>  = <span class="v">$className</span>;</div>
<div class="ln" style="top:918px">36</div>
<div class="cl" style="top:918px">        <span class="v">$data</span>-><span class="p">methodName</span> = <span class="v">$methodName</span>;</div>
<div class="ln" style="top:962px">37</div>
<div class="cl" style="top:962px">        <span class="v">$data</span>-><span class="p">fileName</span>   = <span class="v">$fileName</span>;</div>
<div class="ln" style="top:1006px">38</div>
<div class="cl" style="top:1006px">        <span class="v">$data</span>-><span class="p">post</span>       = <span class="k">false</span>;</div>
<div class="ln" style="top:1050px">39</div>
<div class="cl" style="top:1050px"></div>
<div class="ln" style="top:1094px">40</div>
<div class="cl" style="top:1094px">        <span class="v">$file</span> = <span class="f">file</span>(<span class="v">$fileName</span>);</div>
<div class="ln" style="top:1138px">41</div>
<div class="cl" style="top:1138px">        <span class="k">for</span>(<span class="v">$i</span> = <span class="v">$data</span>-><span class="p">startLine</span> - <span class="n">1</span>; <span class="v">$i</span> <= <span class="v">$data</span>-><span class="p">endLine</span>; <span class="v">$i</span>++)</div>
<div class="ln" style="top:1182px">42</div>
<div class="cl" style="top:1182px">        {</div>
<div class="ln" style="top:1226px">43</div>
<div class="cl" style="top:1226px">            <span class="k">if</span>(<span class="f">strpos</span>(<span class="v">$file</span>[<span class="v">$i</span>], <span class="h">needle:</span><span class="s">'$this-&gt;post'</span>) <span class="k">or</span> <span class="f">strpos</span>(<span class="v">$file</span>[<span class="v">$i</span>], <span class="h">needle:</span><span class="s">'fixer::input'</span>) <span class="k">or</span> <span class="f">strpos</span>(<span class="v">$file</span>[<span class="v">$i</span>], <span class="h">needle:</span><span class="s">'$_POST'</span>))</div>
<div class="ln" style="top:1270px">44</div>
<div class="cl" style="top:1270px">            {</div>
<div class="ln" style="top:1314px">45</div>
<div class="cl" style="top:1314px">                <span class="v">$data</span>-><span class="p">post</span> = <span class="k">true</span>;</div>
<div class="ln" style="top:1358px">46</div>
<div class="cl" style="top:1358px">            }</div>
<div class="ln" style="top:1402px">47</div>
<div class="cl" style="top:1402px">        }</div>
<svg class="abs" style="left:231.5px;top:294.8px" width="32" height="5.600" viewBox="0 0 32 5.600" fill="none"><polyline points="0.0,4.7 4.0,0.9 8.0,4.7 12.0,0.9 16.0,4.7 20.0,0.9 24.0,4.7 28.0,0.9 32.0,4.7" stroke="#8a733c" stroke-width="1.500" stroke-linejoin="miter"/></svg>
<svg class="abs" style="left:631.5px;top:338.8px" width="144" height="5.600" viewBox="0 0 144 5.600" fill="none"><polyline points="0.0,4.7 4.0,0.9 8.0,4.7 12.0,0.9 16.0,4.7 20.0,0.9 24.0,4.7 28.0,0.9 32.0,4.7 36.0,0.9 40.0,4.7 44.0,0.9 48.0,4.7 52.0,0.9 56.0,4.7 60.0,0.9 64.0,4.7 68.0,0.9 72.0,4.7 76.0,0.9 80.0,4.7 84.0,0.9 88.0,4.7 92.0,0.9 96.0,4.7 100.0,0.9 104.0,4.7 108.0,0.9 112.0,4.7 116.0,0.9 120.0,4.7 124.0,0.9 128.0,4.7 132.0,0.9 136.0,4.7 140.0,0.9 144.0,4.7" stroke="#8a733c" stroke-width="1.500" stroke-linejoin="miter"/></svg>
<svg class="abs" style="left:807.5px;top:338.8px" width="144" height="5.600" viewBox="0 0 144 5.600" fill="none"><polyline points="0.0,4.7 4.0,0.9 8.0,4.7 12.0,0.9 16.0,4.7 20.0,0.9 24.0,4.7 28.0,0.9 32.0,4.7 36.0,0.9 40.0,4.7 44.0,0.9 48.0,4.7 52.0,0.9 56.0,4.7 60.0,0.9 64.0,4.7 68.0,0.9 72.0,4.7 76.0,0.9 80.0,4.7 84.0,0.9 88.0,4.7 92.0,0.9 96.0,4.7 100.0,0.9 104.0,4.7 108.0,0.9 112.0,4.7 116.0,0.9 120.0,4.7 124.0,0.9 128.0,4.7 132.0,0.9 136.0,4.7 140.0,0.9 144.0,4.7" stroke="#8a733c" stroke-width="1.500" stroke-linejoin="miter"/></svg>
<svg class="abs" style="left:631.5px;top:470.8px" width="112" height="5.600" viewBox="0 0 112 5.600" fill="none"><polyline points="0.0,4.7 4.0,0.9 8.0,4.7 12.0,0.9 16.0,4.7 20.0,0.9 24.0,4.7 28.0,0.9 32.0,4.7 36.0,0.9 40.0,4.7 44.0,0.9 48.0,4.7 52.0,0.9 56.0,4.7 60.0,0.9 64.0,4.7 68.0,0.9 72.0,4.7 76.0,0.9 80.0,4.7 84.0,0.9 88.0,4.7 92.0,0.9 96.0,4.7 100.0,0.9 104.0,4.7 108.0,0.9 112.0,4.7" stroke="#8a733c" stroke-width="1.500" stroke-linejoin="miter"/></svg>
<svg class="abs" style="left:759.5px;top:514.8px" width="96" height="5.600" viewBox="0 0 96 5.600" fill="none"><polyline points="0.0,4.7 4.0,0.9 8.0,4.7 12.0,0.9 16.0,4.7 20.0,0.9 24.0,4.7 28.0,0.9 32.0,4.7 36.0,0.9 40.0,4.7 44.0,0.9 48.0,4.7 52.0,0.9 56.0,4.7 60.0,0.9 64.0,4.7 68.0,0.9 72.0,4.7 76.0,0.9 80.0,4.7 84.0,0.9 88.0,4.7 92.0,0.9 96.0,4.7" stroke="#8a733c" stroke-width="1.500" stroke-linejoin="miter"/></svg>
<svg class="abs" style="left:503.5px;top:646.8px" width="256" height="5.600" viewBox="0 0 256 5.600" fill="none"><polyline points="0.0,4.7 4.0,0.9 8.0,4.7 12.0,0.9 16.0,4.7 20.0,0.9 24.0,4.7 28.0,0.9 32.0,4.7 36.0,0.9 40.0,4.7 44.0,0.9 48.0,4.7 52.0,0.9 56.0,4.7 60.0,0.9 64.0,4.7 68.0,0.9 72.0,4.7 76.0,0.9 80.0,4.7 84.0,0.9 88.0,4.7 92.0,0.9 96.0,4.7 100.0,0.9 104.0,4.7 108.0,0.9 112.0,4.7 116.0,0.9 120.0,4.7 124.0,0.9 128.0,4.7 132.0,0.9 136.0,4.7 140.0,0.9 144.0,4.7 148.0,0.9 152.0,4.7 156.0,0.9 160.0,4.7 164.0,0.9 168.0,4.7 172.0,0.9 176.0,4.7 180.0,0.9 184.0,4.7 188.0,0.9 192.0,4.7 196.0,0.9 200.0,4.7 204.0,0.9 208.0,4.7 212.0,0.9 216.0,4.7 220.0,0.9 224.0,4.7 228.0,0.9 232.0,4.7 236.0,0.9 240.0,4.7 244.0,0.9 248.0,4.7 252.0,0.9 256.0,4.7" stroke="#8a733c" stroke-width="1.500" stroke-linejoin="miter"/></svg>
<div class="abs" style="left:2120px;top:978px;width:28px;height:4px;background:#d6ae58"></div>
<div class="abs" style="left:2120px;top:1286px;width:28px;height:4px;background:#d6ae58"></div>
<div class="abs" style="left:1848px;top:4px;width:300px;height:44px;background:#1e1f22"></div>
<svg style="position:absolute;left:1861px;top:12px" width="26" height="24" viewBox="0 0 26 24" fill="none" ><path d="M10.300 3.300 C11.500 1.100 14.500 1.100 15.700 3.300 L24.300 18.300 C25.500 20.500 24 23 21.500 23 H4.500 C2 23 0.500 20.500 1.700 18.300 Z" fill="#c9a54e"/><rect x="11.500" y="7" width="3" height="8.500" rx="1.500" fill="#1e1f22"/><circle cx="13" cy="18.800" r="1.800" fill="#1e1f22"/></svg>
<svg style="position:absolute;left:1923px;top:12px" width="26" height="24" viewBox="0 0 26 24" fill="none" ><path d="M10.300 3.300 C11.500 1.100 14.500 1.100 15.700 3.300 L24.300 18.300 C25.500 20.500 24 23 21.500 23 H4.500 C2 23 0.500 20.500 1.700 18.300 Z" fill="#8a7340"/><rect x="11.500" y="7" width="3" height="8.500" rx="1.500" fill="#1e1f22"/><circle cx="13" cy="18.800" r="1.800" fill="#1e1f22"/></svg>
<span class="t" style="left:1892.5px;top:7px;color:#bcbec4">2</span>
<span class="t" style="left:1954.5px;top:7px;color:#bcbec4">23</span>
<svg style="position:absolute;left:2002px;top:13px" width="27" height="29" viewBox="0 0 27 29" fill="none" ><path d="M3.500 12 L9.800 18 L23 3.500" stroke="#57a560" stroke-width="3.6" stroke-linecap="round" stroke-linejoin="round"/><path d="M2.500 26 L6.500 22 L10.500 25.500 L14.500 22 L18.500 25.500 L22.500 22" stroke="#57a560" stroke-width="1.900" stroke-linejoin="round" stroke-linecap="round"/></svg>
<span class="t" style="left:2034px;top:7px;color:#bcbec4">4</span>
<svg style="position:absolute;left:2074px;top:22px" width="16.5" height="9" viewBox="0 0 16.5 9" fill="none" ><path d="M1 8 L8.25 1.2 L15.5 8" stroke="#ced0d6" stroke-width="2" stroke-linecap="round" stroke-linejoin="round"/></svg>
<svg style="position:absolute;left:2115.5px;top:21.5px" width="16.5" height="9" viewBox="0 0 16.5 9" fill="none" ><path d="M1 1 L8.25 7.8 L15.5 1" stroke="#ced0d6" stroke-width="2" stroke-linecap="round" stroke-linejoin="round"/></svg>
<div class="abs" style="left:1796px;top:80px;width:236px;height:68px;border-radius:9px;background:#27282c"></div>
</div>
<svg style="position:absolute;left:1819.5px;top:179px" width="33" height="33" viewBox="0 0 34 34" fill="none" >
<polygon points="5.5,0.5 17.5,3 20,14 9,26 2.500,27 0.5,7.500" fill="url(#psa)"/>
<polygon points="19,2.5 29,4.5 33.5,15 30,19 33.500,26 24,24 14,12" fill="url(#psb)"/>
<polygon points="2.500,26.500 12,20 31,19 33.5,26 20.5,33.5 9.5,29.5" fill="url(#psc)"/>
<rect x="6.5" y="6.5" width="20.5" height="20.5" fill="#0b0410"/>
<rect x="9" y="22" width="7.5" height="1.6" fill="#d8d8d8"/>
<text x="8.3" y="16.9" font-family="Liberation Sans,sans-serif" font-weight="bold" font-size="10.2" fill="#fff" textLength="13.5" lengthAdjust="spacingAndGlyphs">PS</text>
</svg>
<svg style="position:absolute;left:1874.0px;top:182px" width="29" height="29" viewBox="0 0 30 30" fill="none" >
<circle cx="15" cy="15" r="14" fill="#fff"/>
<path d="M15 15 L2.88 8 A14 14 0 0 1 27.12 8 Z" fill="#e0483c"/>
<path d="M15 15 L27.12 8 A14 14 0 0 1 15 29 Z" fill="#fbc116"/>
<path d="M15 15 L15 29 A14 14 0 0 1 2.88 8 Z" fill="#1d9c5a"/>
<path d="M15 8 H27.12 A14 14 0 0 0 2.88 8 L9 18.500 Z" fill="#e33b2e"/>
<path d="M21.060 18.500 L15 29 A14 14 0 0 0 27.120 8 H15 Z" fill="#fbc116"/>
<path d="M8.940 18.500 L2.880 8 A14 14 0 0 0 15 29 L21.060 18.500 Z" fill="#1d9c5a"/>
<circle cx="15" cy="15" r="7" fill="#fff"/>
<circle cx="15" cy="15" r="5.500" fill="#4a8af4"/>
</svg>
<svg style="position:absolute;left:1924px;top:177px" width="32" height="36" viewBox="0 0 32 36" fill="none" >
<defs>
<radialGradient id="ffa" cx="0.72" cy="0.15" r="1.05"><stop offset="0" stop-color="#fff36a"/><stop offset="0.32" stop-color="#ffc22f"/><stop offset="0.58" stop-color="#ff7a2a"/><stop offset="0.8" stop-color="#f5305f"/><stop offset="1" stop-color="#e31587"/></radialGradient>
<radialGradient id="ffb" cx="0.5" cy="0.35" r="0.65"><stop offset="0" stop-color="#9a6bff"/><stop offset="1" stop-color="#5b2fc0"/></radialGradient>
</defs>
<path d="M17 8.500 C19 7.500 20 5 20.300 2.500 C23.500 5 26 8.500 26.800 11.500 C30 14 31 17.500 31 20.500 C31 28.500 24.500 34 16 34 C7.500 34 1 28.500 1 20.500 C1 16.500 2.300 13.500 4 11.500 C4 12.500 4.300 13.500 4.800 14 C5 11.500 6 9.500 7.500 8 C8 9.500 9 10.500 10 11 C11.500 9.200 14 8.500 17 8.500 Z" fill="url(#ffa)"/>
<circle cx="16.500" cy="19.500" r="6.200" fill="url(#ffb)"/>
<path d="M5.500 16 C7.500 14 11 14 13 15.700 C15 17.400 18 17.200 20 16.200 C19 19.400 16 20.700 13 20 C10 19.300 7.500 18 5.500 16 Z" fill="#ffa52a"/>
<path d="M7 22 C8.500 27.500 12.500 30 17 30 C22 30 26 26.500 27 21.500 C28.500 26.500 25 33 17 33.300 C10.500 33.300 6 28 7 22 Z" fill="#ff3d5a" opacity="0.85"/>
</svg>
<svg style="position:absolute;left:1977px;top:181px" width="30" height="30" viewBox="0 0 30 30" fill="none" >
<defs>
<linearGradient id="eda" x1="0" y1="0.3" x2="1" y2="0.2"><stop offset="0" stop-color="#2a9fe0"/><stop offset="0.55" stop-color="#35c6bd"/><stop offset="1" stop-color="#6fe06a"/></linearGradient>
<linearGradient id="edb" x1="0" y1="0" x2="0" y2="1"><stop offset="0" stop-color="#1b86d8"/><stop offset="1" stop-color="#0d4a94"/></linearGradient>
</defs>
<circle cx="15" cy="15" r="14" fill="url(#edb)"/>
<path d="M1.200 13 C2 5.500 8 1 15 1 C23 1 29 7 29 13.500 C29 18 25.500 20.500 22 20.500 C19 20.500 17.500 19.200 18 17.800 C18.800 15.800 19 14 17.500 12 C15.500 9.500 11 9 7.500 11 C4.500 12.700 2.500 16 2 19.500 C1.300 17.500 1 15.500 1.200 13 Z" fill="url(#eda)"/>
<path d="M10.500 14 C8.500 17 8.500 21.500 11.500 24.500 C14.500 27.500 19.500 27.500 23.500 25 C20.500 29 14 30 9 27.500 C4 25 1.500 19.500 2 14.500 C3 10.500 7.500 9 10.500 10.500 C10 11.500 10.500 12.500 10.500 14 Z" fill="#1468c0"/>
<path d="M12.500 17.500 C12 14.500 14.500 12.300 17 12.800 C19 13.200 19.800 15 19.300 16.800 C18.800 18.500 17.800 19.500 18.300 20.800 C19 22.500 22 23 24.500 22 C26.500 21.200 28 20 29 18.500 C28.500 21.500 27 24 24.500 25.800 C20 27 14 24.500 12.500 17.500 Z" fill="#27282c"/>
</svg>
<div class="abs" style="left:0;top:1516.3px;width:2148px;height:2px;background:#36383d"></div>
<span class="t" style="left:20.5px;top:1521px;color:#b4b7bd">apiModel</span>
<svg style="position:absolute;left:156px;top:1535px" width="6" height="11" viewBox="0 0 6 11" fill="none" ><path d="M1 1 L4.8 5.5 L1 10" stroke="#6f737a" stroke-width="1.6" stroke-linecap="round" stroke-linejoin="round"/></svg>
<span class="t" style="left:182.5px;top:1521px;color:#b4b7bd">getMethod()</span>
</div>
<div id="rstrip" class="abs">
<svg style="position:absolute;left:21px;top:20px" width="38" height="42" viewBox="0 0 38 42" fill="none" >
<g stroke="#ced0d6" stroke-width="2.9" stroke-linecap="round" stroke-linejoin="round" fill="none">
<path d="M19 3.800 C13 3.800 9.800 8 9.800 14 V19 C9.800 22.500 7 26 4.300 29.300 C3.700 30 4 31 5 31 H33 C34 31 34.300 30 33.700 29.300 C31 26 28.200 22.500 28.200 19 V14 C28.200 8 25 3.800 19 3.800 Z"/>
</g>
<path d="M14.800 34.500 H23.200 C22.500 37 21 38.300 19 38.300 C17 38.300 15.500 37 14.800 34.500 Z" fill="#ced0d6"/>
</svg>
<div class="abs" style="left:45.5px;top:19.5px;width:15px;height:15px;border-radius:50%;background:#548af7;box-shadow:0 0 0 2.5px #2b2d30"></div>
<svg style="position:absolute;left:20px;top:101.5px" width="38" height="38" viewBox="0 0 38 38" fill="none" >
<g stroke="#ced0d6" stroke-width="2.9" stroke-linecap="round" fill="none">
<path d="M19.500 19 C19.800 17 17.800 15.800 16 16.800 C13.500 18.200 13.800 21.800 16.500 23 C20.500 24.800 25.500 22.500 26.500 18 C27.600 13 23.500 8.800 18 8.800 C10.500 8.800 5.500 14 6 20.500 C6.500 27 12 31 19 32.500 C24 33.500 29 33 33 31.500"/>
<path d="M7.500 8.500 C12 3.500 21.500 1.800 28.500 6 C33.500 9 35.500 14.500 34 20"/>
</g></svg>
<svg style="position:absolute;left:21px;top:178px" width="38" height="42" viewBox="0 0 38 42" fill="none" >
<g stroke="#ced0d6" stroke-width="2.9" stroke-linecap="round" fill="none">
<ellipse cx="19" cy="9.750" rx="15" ry="5"/>
<path d="M4 9.750 V33.500 C4 36.300 10.700 38.500 19 38.500 C27.300 38.500 34 36.300 34 33.500 V9.750"/>
<path d="M4 17.700 C4 20.500 10.700 22.700 19 22.700 C27.300 22.700 34 20.500 34 17.700"/>
<path d="M4 25.600 C4 28.400 10.700 30.600 19 30.600 C27.300 30.600 34 28.400 34 25.600"/>
</g></svg>
</div>
<div class="abs" style="left:0;top:1646px;width:2879px;height:2px;background:#1e1f22"></div>
<div id="status" class="abs">
<svg style="position:absolute;left:27px;top:19px" width="18" height="18" viewBox="0 0 18 18" fill="none" ><rect x="1.500" y="1.500" width="15" height="15" rx="3.500" stroke="#548af7" stroke-width="2.200" fill="#25324d"/></svg>
<span class="t" style="left:52.5px;top:7px;font-size:26px">WWW</span>
<svg style="position:absolute;left:146.5px;top:19px" width="9.5" height="16" viewBox="0 0 9.5 16" fill="none" ><path d="M1 1 L8.3 8.0 L1 15" stroke="#a4a7ae" stroke-width="2" stroke-linecap="round" stroke-linejoin="round"/></svg>
<svg style="position:absolute;left:286.5px;top:19px" width="9.5" height="16" viewBox="0 0 9.5 16" fill="none" ><path d="M1 1 L8.3 8.0 L1 15" stroke="#a4a7ae" stroke-width="2" stroke-linecap="round" stroke-linejoin="round"/></svg>
<svg style="position:absolute;left:373px;top:19px" width="9.5" height="16" viewBox="0 0 9.5 16" fill="none" ><path d="M1 1 L8.3 8.0 L1 15" stroke="#a4a7ae" stroke-width="2" stroke-linecap="round" stroke-linejoin="round"/></svg>
<svg style="position:absolute;left:590.5px;top:19px" width="9.5" height="16" viewBox="0 0 9.5 16" fill="none" ><path d="M1 1 L8.3 8.0 L1 15" stroke="#a4a7ae" stroke-width="2" stroke-linecap="round" stroke-linejoin="round"/></svg>
<svg style="position:absolute;left:792px;top:19px" width="9.5" height="16" viewBox="0 0 9.5 16" fill="none" ><path d="M1 1 L8.3 8.0 L1 15" stroke="#a4a7ae" stroke-width="2" stroke-linecap="round" stroke-linejoin="round"/></svg>
<span class="t" style="left:177px;top:7px">module</span>
<span class="t" style="left:317px;top:7px">api</span>
<span style="position:absolute;left:402px;top:15px;width:34px;height:24px;overflow:visible;font:italic bold 19.5px/24px 'Liberation Sans',sans-serif;color:#5a8df0;display:inline-block;transform-origin:0 50%;transform:scaleX(0.92);letter-spacing:-0.5px;white-space:nowrap">php</span>
<span class="t" style="left:443px;top:7px">model.php</span>
<svg style="position:absolute;left:621px;top:13px" width="30" height="30" viewBox="0 0 30 30" fill="none" ><circle cx="15" cy="15" r="13" stroke="#548af7" stroke-width="2.200" fill="#25324d"/><path d="M19.800 11 C18.800 9.300 17.200 8.300 15.200 8.300 C11.800 8.300 9.500 11 9.500 15 C9.500 19 11.800 21.700 15.200 21.700 C17.200 21.700 18.800 20.700 19.800 19" stroke="#548af7" stroke-width="2.200" stroke-linecap="round"/></svg>
<span class="t" style="left:660px;top:7px">apiModel</span>
<svg style="position:absolute;left:823.5px;top:12px" width="30" height="30" viewBox="0 0 30 30" fill="none" ><circle cx="15" cy="15" r="13" stroke="#db5c5c" stroke-width="2.200" fill="#402929"/><path d="M8.500 21 V12.500 M8.500 14.500 C8.500 12 13 11 15 13.500 V21 M15 14.500 C15.500 12 21.500 11 21.500 15 V21" stroke="#db5c5c" stroke-width="2.100" stroke-linecap="round" fill="none"/></svg>
<svg style="position:absolute;left:859px;top:15px" width="20" height="20" viewBox="0 0 20 20" fill="none" ><rect x="4" y="9" width="13" height="9.500" rx="1.500" fill="#57965c"/><path d="M3 9 V6 C3 3.500 4.500 2 6.500 2 C8.500 2 10 3.500 10 6 V9" stroke="#57965c" stroke-width="2" fill="none"/></svg>
<span class="t" style="left:894px;top:7px">getMethod</span>
<span class="t" style="left:2106.5px;top:7px;font-size:26px">PHP: 7.0</span>
<span class="t" style="left:2245px;top:7px;font-size:27.200px">29:72</span>
<span class="t" style="left:2347px;top:7px;font-size:25px">LF</span>
<span class="t" style="left:2408.5px;top:7px;font-size:27.500px">UTF-8</span>
<svg style="position:absolute;left:2520px;top:12px" width="32" height="31" viewBox="0 0 32 31" fill="none" ><g stroke="#ced0d6" stroke-width="2.300" stroke-linecap="round" fill="none">
<path d="M3 16 C6 9.500 11 7 16 7 C21 7 26 9.500 29 16 C26 22.500 21 25 16 25 C11 25 6 22.500 3 16 Z"/>
<path d="M20.500 14 C21.500 17 19.500 20.500 16 20.500"/>
<path d="M4.500 27.500 L28 3.500"/></g></svg>
<svg style="position:absolute;left:2584px;top:11px" width="34" height="32" viewBox="0 0 34 32" fill="none" >
<g stroke="#ced0d6" stroke-width="2.300" stroke-linecap="round" fill="none">
<path d="M17.500 8 C12 7 8.500 11 8.500 16 V21.500 C8.500 27 12 30.500 16 30.500 C20 30.500 23.500 27 23.500 22.500"/>
<path d="M2 19 H8"/><path d="M23.500 19 H29.500"/>
<path d="M3.500 11.500 L8.500 14"/><path d="M3.500 28 L9 25"/><path d="M29 28 L23.500 25"/>
</g>
<circle cx="20" cy="13.500" r="2.700" fill="#57a560"/>
<path d="M21 7.500 A6.500 6.500 0 0 1 26.500 13" stroke="#57a560" stroke-width="2" stroke-linecap="round"/>
<path d="M22.500 2.500 A11 11 0 0 1 31.500 11.500" stroke="#57a560" stroke-width="2" stroke-linecap="round"/>
</svg>
<span class="t" style="left:2648.5px;top:7px;font-size:27px">4 <span class="cjk" style="font-size:25px;position:relative;top:1.5px">个空格</span></span>
<svg style="position:absolute;left:2754px;top:12px" width="30" height="32" viewBox="0 0 30 32" fill="none" ><g stroke="#ced0d6" stroke-width="2.300" stroke-linecap="round" stroke-linejoin="round" fill="none">
<path d="M12 28 H7 C4.500 28 3 26.500 3 24 V10 L11 2.500 H17.500 C20 2.500 21.500 4 21.500 6.500 V13"/>
<path d="M11 3 V8 C11 9.500 10 10.500 8.500 10.500 H3.500"/>
<circle cx="21" cy="23.500" r="3"/>
<path d="M21 16.500 V18.500 M21 28.500 V30.500 M14.900 20 L16.700 21 M25.300 26 L27.100 27 M14.900 27 L16.700 26 M25.300 21 L27.100 20"/>
</g></svg>
<svg style="position:absolute;left:2818px;top:13px" width="32" height="30" viewBox="0 0 32 30" fill="none" ><g stroke="#ced0d6" stroke-width="2.300" stroke-linecap="round" fill="none">
<rect x="2.500" y="12.500" width="18.500" height="15" rx="3.500"/>
<path d="M16 12.500 V8 C16 4.500 18.500 2.500 22 2.500 C25.500 2.500 28 4.500 28 8 V10.500"/>
<path d="M11.700 18 V22"/></g></svg>
</div>
<div id="taskbar" class="abs"><div class="abs" style="left:2027px;top:7px;width:75px;height:8px;border-radius:6px 6px 0 0;background:#2c2a3c"></div></div>
</body></html>
